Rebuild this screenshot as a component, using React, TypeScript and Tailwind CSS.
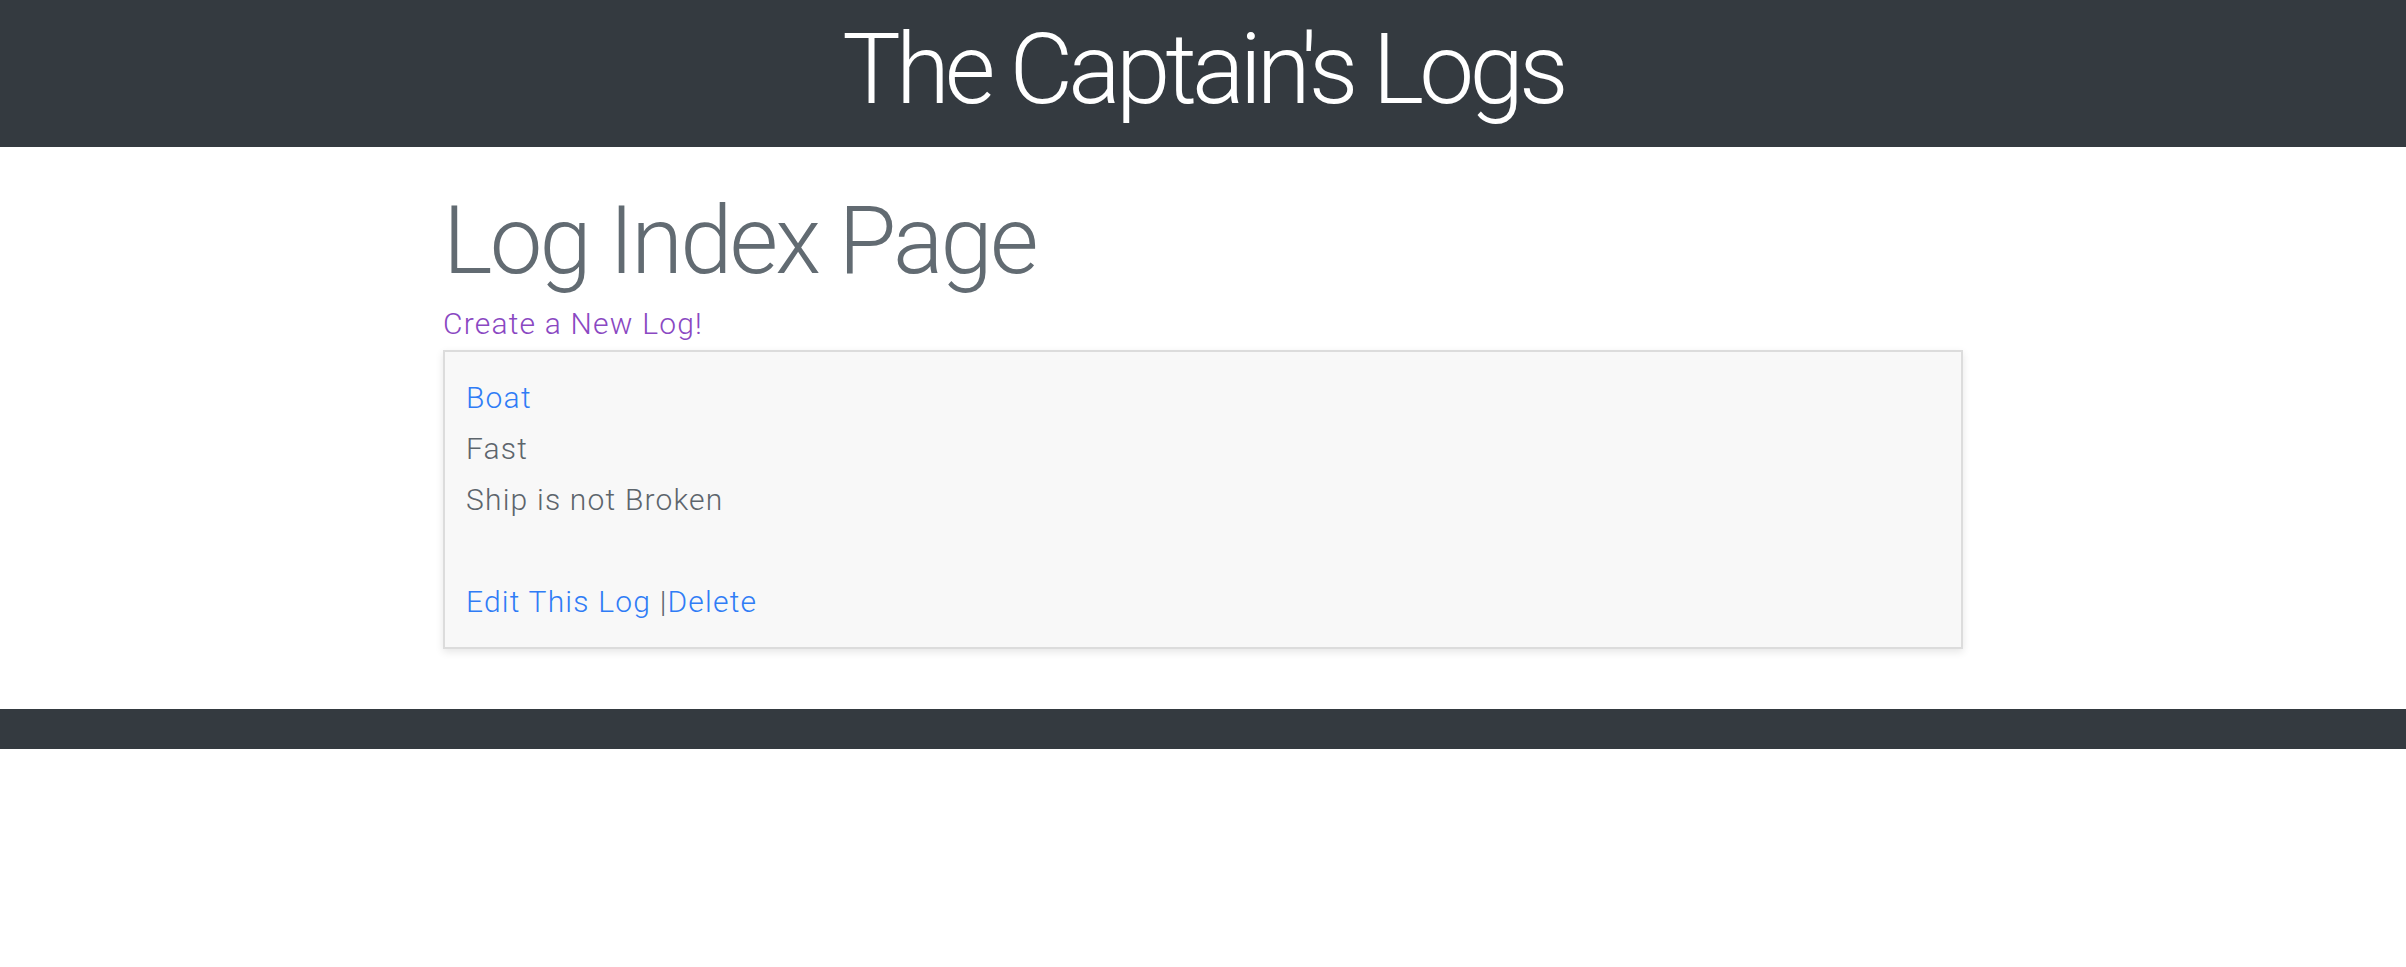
export default function App() {
    return (
        <div className="min-h-screen bg-white font-['Roboto','Liberation_Sans',sans-serif]">
            {/* Header */}
            <header className="h-[147px] bg-[#343a40] pt-[11px] text-center">
                <h1 className="text-[98px] font-light leading-[1.2] tracking-[-0.05em] text-white">The Captain's Logs</h1>
            </header>

            {/* Index */}
            <main className="mx-auto w-[1520px]">
                <h1 className="mt-[38px] text-[94px] font-light leading-[1.2] tracking-[-0.03em] text-[#626b72]">Log Index Page</h1>
                <a href="#" className="block text-[30px] font-light leading-[51px] tracking-[0.04em] text-[#8a48c2]">
                    Create a New Log!
                </a>

                <ul className="mt-px">
                    <li className="border-2 border-[#dcdcdc] bg-[#f8f8f8] py-[20px] pr-[20px] pl-[21px] text-[30px] font-light leading-[51px] tracking-[0.04em] text-[#5d656c] shadow-[0_3px_8px_rgba(0,0,0,0.1)]">
                        <a href="#" className="block text-[#2f7cf6]">Boat</a>
                        <div>Fast</div>
                        <div>Ship is not Broken</div>
                        <br />
                        <div>
                            <a href="#" className="text-[#2f7cf6]">Edit This Log</a>
                            <span> |</span>
                            <a href="#" className="text-[#2f7cf6]">Delete</a>
                        </div>
                    </li>
                </ul>
            </main>

            <footer className="mt-[60px] h-[40px] bg-[#343a40]"></footer>
        </div>
    );
}
